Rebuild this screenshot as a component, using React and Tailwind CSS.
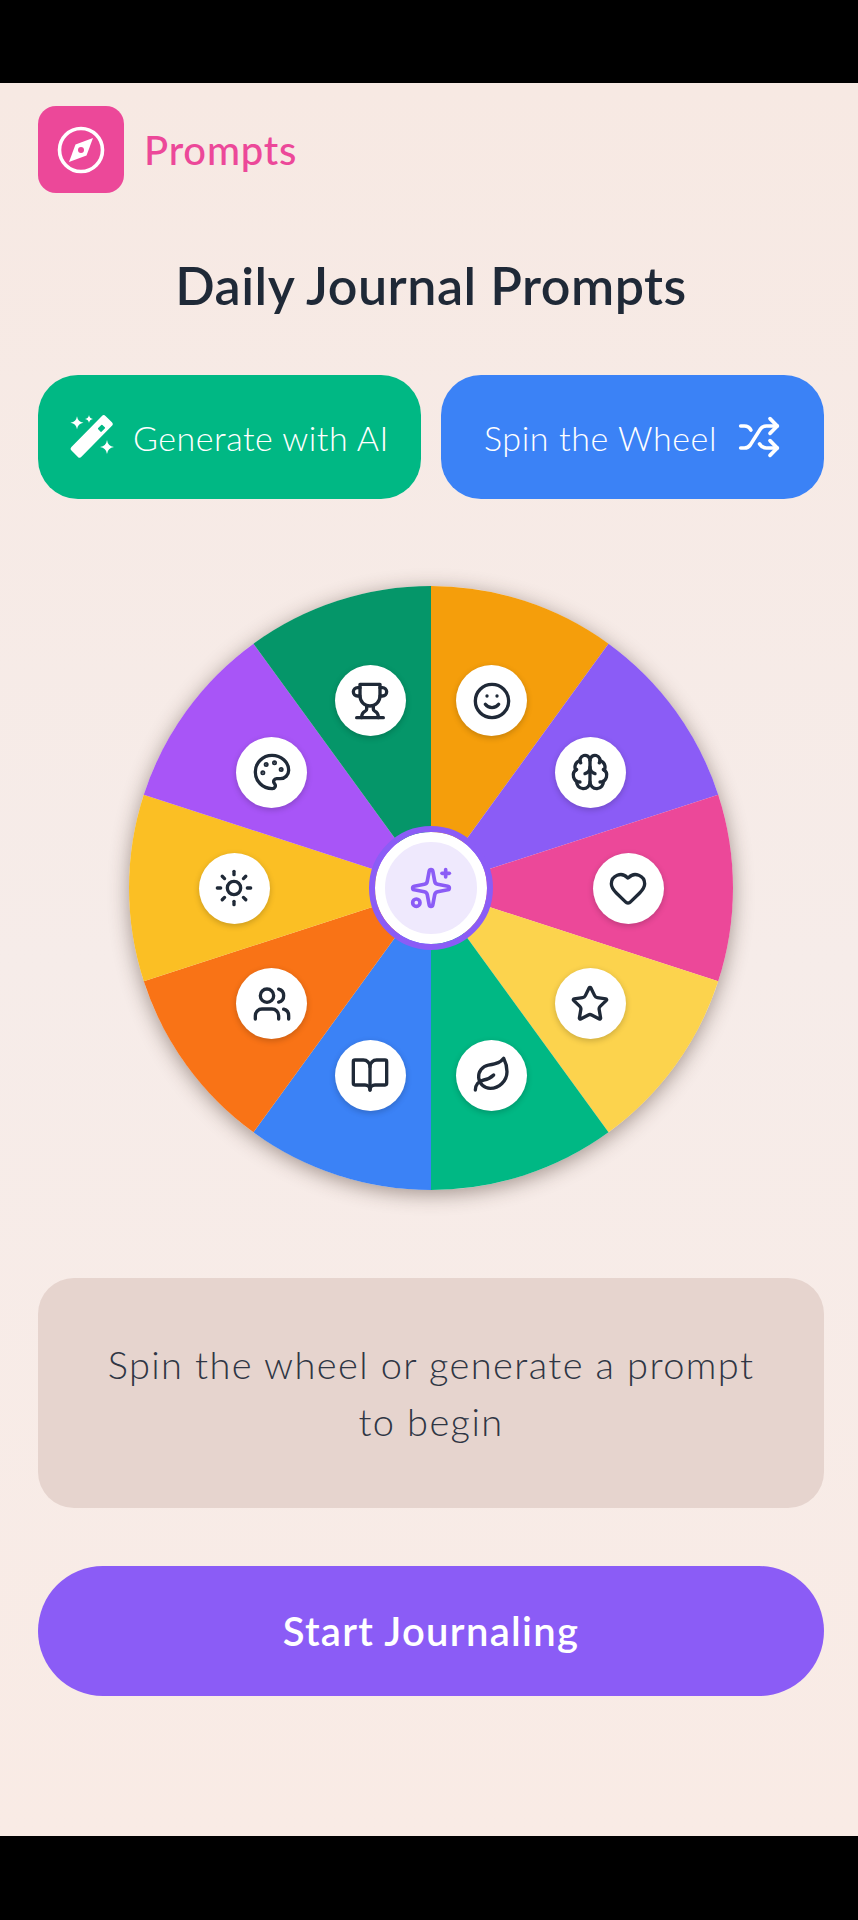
import React from "react";
import { Shuffle, Smile, Brain, Heart, Star, Leaf, BookOpen, Users, Sun, Palette, Sparkles } from "lucide-react";

const CX = 302, CY = 302, R = 302, BADGE_R = 197;

function OldTrophy({ size }) {
  return (
    <svg width={size} height={size} viewBox="0 0 24 24" fill="none" stroke="currentColor" strokeWidth="2" strokeLinecap="round" strokeLinejoin="round">
      <path d="M6 9H4.5a2.5 2.5 0 0 1 0-5H6" />
      <path d="M18 9h1.5a2.5 2.5 0 0 0 0-5H18" />
      <path d="M4 22h16" />
      <path d="M10 14.66V17c0 .55-.47.98-.97 1.21C7.85 18.75 7 20.24 7 22" />
      <path d="M14 14.66V17c0 .55.47.98.97 1.21C16.15 18.75 17 20.24 17 22" />
      <path d="M18 2H6v7a6 6 0 0 0 12 0V2Z" />
    </svg>
  );
}

const segments = [
  { color: "#f59e0b", Icon: Smile },
  { color: "#8b5cf6", Icon: Brain },
  { color: "#ec4899", Icon: Heart },
  { color: "#fcd34d", Icon: Star },
  { color: "#00b884", Icon: Leaf },
  { color: "#3b82f6", Icon: BookOpen },
  { color: "#f97316", Icon: Users },
  { color: "#fbbf24", Icon: Sun },
  { color: "#a855f7", Icon: Palette },
  { color: "#059669", Icon: OldTrophy },
];

function pt(deg, r) {
  const a = (deg * Math.PI) / 180;
  return [CX + r * Math.sin(a), CY - r * Math.cos(a)];
}

function Wand() {
  return (
    <svg width="46" height="46" viewBox="10 14 46 46" fill="#fff">
      <rect x="-24.3" y="-7" width="48.6" height="14" rx="2.5" transform="translate(31.7 36.4) rotate(-45.6)" />
      <rect x="-3" y="-2.5" width="6" height="5" rx="0.8" fill="#00b884" transform="translate(41.5 28.3) rotate(-45.6)" />
      <path d="M17 16.2 Q17.8 21.9 23.5 22.7 Q17.8 23.5 17 29.2 Q16.2 23.5 10.5 22.7 Q16.2 21.9 17 16.2 Z" />
      <path d="M29 15 Q29.5 18.5 33 19 Q29.5 19.5 29 23 Q28.5 19.5 25 19 Q28.5 18.5 29 15 Z" />
      <path d="M47 40 Q47.8 46.2 54 47 Q47.8 47.8 47 54 Q46.2 47.8 40 47 Q46.2 46.2 47 40 Z" />
    </svg>
  );
}

function CompassMark() {
  return (
    <svg width="48" height="48" viewBox="0 0 48 48">
      <circle cx="24" cy="24" r="21.5" fill="none" stroke="#fff" strokeWidth="3.6" />
      <path d="M36 12 L29.5 29.5 L12 36 L18.5 18.5 Z" fill="#fff" />
      <circle cx="24" cy="24" r="3" fill="#ec4899" />
    </svg>
  );
}

export default function App() {
  const font = "font-['Lato','Open_Sans',sans-serif]";
  return (
    <div className={`w-[858px] h-[1920px] flex flex-col bg-black ${font}`}>
      <div className="h-[83px] shrink-0" />
      <main className="h-[1753px] shrink-0 flex flex-col pl-[38px] pr-[34px] bg-gradient-to-b from-[#f7e9e3] via-[#f6ece9] to-[#f9ebe5]">
        <header className="flex items-center gap-5 mt-[23px] h-[87px]">
          <div className="w-[86px] h-[87px] rounded-[18px] bg-[#ec4899] flex items-center justify-center">
            <CompassMark />
          </div>
          <span className="text-[#ec4899] text-[40px] font-medium tracking-[0.8px]">Prompts</span>
        </header>

        <h1 className="mt-[58px] h-[68px] leading-[68px] text-center text-[#1f2937] text-[52px] font-semibold tracking-[0.5px]">Daily Journal Prompts</h1>

        <div className="mt-[56px] grid grid-cols-2 gap-5 h-[124px]">
          <button className="rounded-[40px] bg-[#00b884] text-white flex items-center justify-center gap-[17px] text-[34px] font-light tracking-[0.5px]">
            <Wand />
            <span>Generate with AI</span>
          </button>
          <button className="rounded-[40px] bg-[#3b82f6] text-white flex items-center justify-center gap-[20px] text-[34px] font-light tracking-[0.6px]">
            <span>Spin the Wheel</span>
            <Shuffle size={44} strokeWidth={2} />
          </button>
        </div>

        <div className="mt-[87px] mx-auto relative w-[604px] h-[604px] rounded-full shadow-[0_4px_20px_rgba(60,40,30,0.45)]">
          <svg width="604" height="604" viewBox="0 0 604 604" className="block">
            {segments.map((s, i) => {
              const [x1, y1] = pt(i * 36, R);
              const [x2, y2] = pt((i + 1) * 36, R);
              return <path key={i} d={`M${CX} ${CY} L${x1} ${y1} A${R} ${R} 0 0 1 ${x2} ${y2} Z`} fill={s.color} />;
            })}
          </svg>
          {segments.map((s, i) => {
            const [x, y] = pt(18 + i * 36, BADGE_R);
            const Icon = s.Icon;
            return (
              <div
                key={i}
                className="absolute w-[71px] h-[71px] -ml-[35.5px] -mt-[35.5px] rounded-full bg-white flex items-center justify-center text-[#1f2937] shadow-[0_2px_6px_rgba(0,0,0,0.2)]"
                style={{ left: x, top: y }}
              >
                <Icon size={40} strokeWidth={2} />
              </div>
            );
          })}
          <div className="absolute left-1/2 top-1/2 -translate-x-1/2 -translate-y-1/2 w-[112px] h-[112px] rounded-full bg-[#efe9fd] border-[10px] border-white outline-[6px] outline-solid outline-[#8b5cf6] box-border flex items-center justify-center text-[#8b5cf6]">
            <Sparkles size={44} strokeWidth={2} />
          </div>
        </div>

        <div className="mt-[88px] h-[230px] rounded-[36px] bg-[#e6d4ce] flex items-center justify-center px-[60px]">
          <p className="text-center text-[#2f3644] text-[38px] leading-[57px] font-light tracking-[1.4px]">Spin the wheel or generate a prompt to begin</p>
        </div>

        <button className="mt-[58px] h-[130px] rounded-full bg-[#8b5cf6] text-white text-[40px] font-semibold tracking-[1.3px]">Start Journaling</button>
      </main>
      <div className="flex-1" />
    </div>
  );
}
